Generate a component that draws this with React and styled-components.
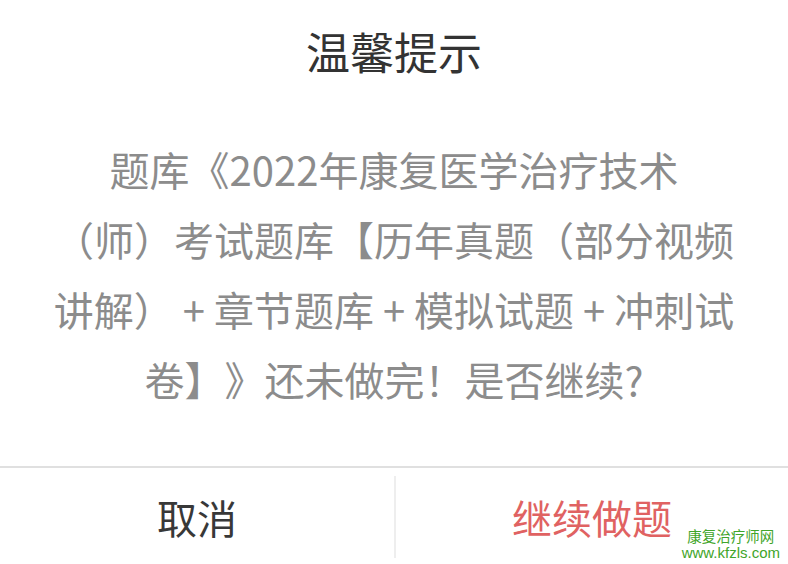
import React from "react";
import styled, { createGlobalStyle } from "styled-components";

const Global = createGlobalStyle`
  html, body { margin: 0; padding: 0; background: #ffffff; }
  body { font-family: "Noto Sans CJK SC", "Noto Sans", sans-serif; text-spacing-trim: space-all; }
`;

const Dialog = styled.div`
  position: relative;
  width: 788px;
  height: 564px;
  background: #ffffff;
  display: flex;
  flex-direction: column;
  overflow: hidden;
`;

const Title = styled.h1`
  margin: 0;
  padding-top: 20px;
  height: 62px;
  font-size: 44px;
  line-height: 62px;
  font-weight: 400;
  color: #333333;
  text-align: center;
`;

const Message = styled.p`
  margin: 0;
  flex: 1;
  padding: 52px 51px 0;
  font-size: 40px;
  line-height: 70px;
  color: #8c8c8c;
  text-align: center;
  text-spacing-trim: space-all;
`;

const Footer = styled.div`
  height: 98px;
  border-top: 2px solid #e0e0e0;
  display: grid;
  grid-template-columns: 1fr 1fr;
  align-items: center;
  padding: 8px 0;
  box-sizing: border-box;
`;

const Action = styled.button`
  height: 82px;
  border: 0;
  background: transparent;
  font-family: inherit;
  font-size: 40px;
  color: ${(p) => (p.$primary ? "#e06262" : "#383838")};
  border-left: ${(p) => (p.$primary ? "2px solid #eeeeee" : "0")};
  padding: 0;
  cursor: pointer;
`;

const Watermark = styled.div`
  position: absolute;
  right: 8px;
  bottom: 3px;
  font-family: "Liberation Sans", "Noto Sans CJK SC", sans-serif;
  font-size: 14px;
  color: #3fa52a;
  text-align: center;
`;

const MarkLine = styled.div`
  height: 16px;
  line-height: 16px;
  font-size: ${(p) => (p.$latin ? "15px" : "14.5px")};
  white-space: nowrap;
`;

export default function App() {
  return (
    <>
      <Global />
      <Dialog>
        <Title>温馨提示</Title>
        <Message>
          题库《2022年康复医学治疗技术（师）考试题库【历年真题（部分视频讲解） + 章节题库 + 模拟试题 + 冲刺试卷】》还未做完！是否继续?
        </Message>
        <Footer>
          <Action>取消</Action>
          <Action $primary>继续做题</Action>
        </Footer>
        <Watermark>
          <MarkLine>康复治疗师网</MarkLine>
          <MarkLine $latin>www.kfzls.com</MarkLine>
        </Watermark>
      </Dialog>
    </>
  );
}
